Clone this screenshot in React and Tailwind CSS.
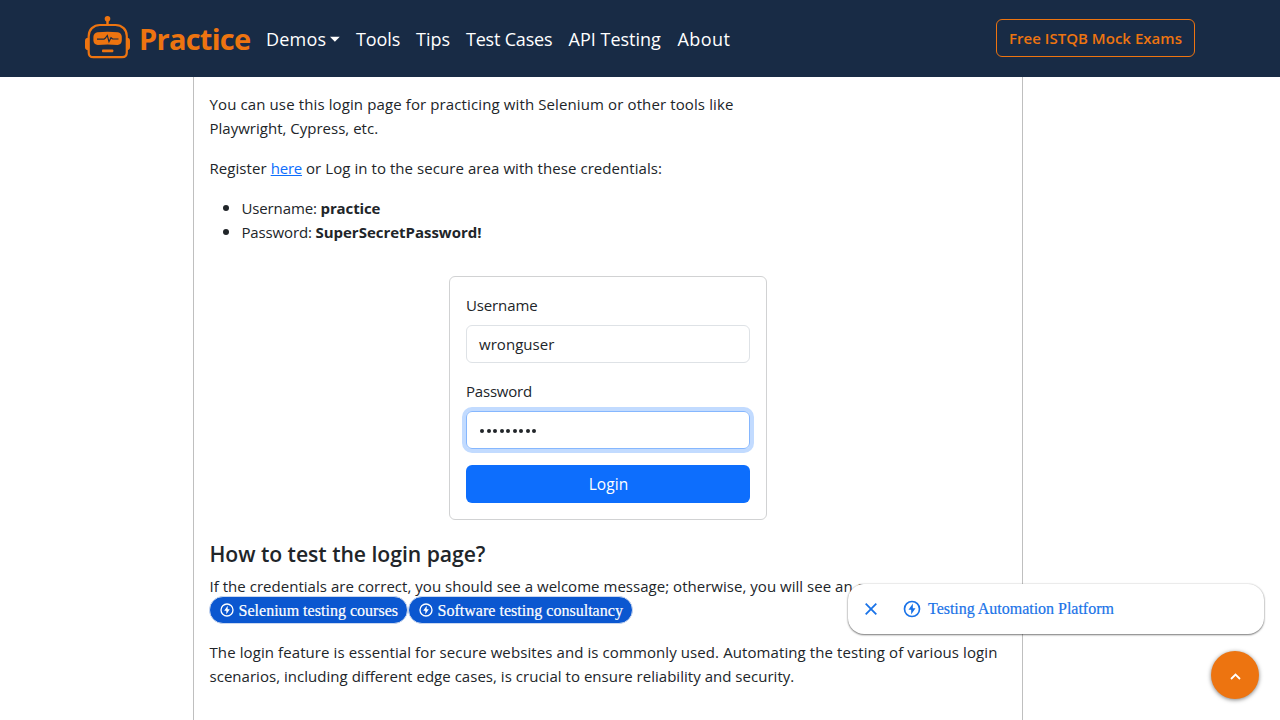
import React from "react";

function RobotLogo() {
  return (
    <svg className="h-[45px] w-[45px] shrink-0" viewBox="0 0 45 45" fill="none">
      <circle cx="22.5" cy="3.7" r="2.8" fill="#ed7410" />
      <path d="M22.5 4v7" stroke="#ed7410" strokeWidth="2.4" />
      <path
        d="M15 10h15.500c6.500 0 11.300 4.600 11.300 11v16.500q0 4.700-4.700 4.700H8.400q-4.700 0-4.700-4.700V21c0-6.400 4.800-11 11.300-11Z"
        stroke="#ed7410"
        strokeWidth="2.200"
      />
      <path d="M3.500 22.800v12.400H3c-1.700 0-3-1.200-3-2.900v-6.600c0-1.700 1.300-2.900 3-2.900zM42 22.800v12.400h.2c1.600 0 2.800-1.200 2.800-2.900v-6.600c0-1.700-1.200-2.900-2.800-2.900z" fill="#ed7410" />
      <path
        d="M12.500 17.200q10.200-1 20.400 0c2.300.4 3.900 2.200 3.900 4.500v3.800c0 2.600-1.900 4.300-4.200 4.500q-9.900-1.200-19.800 0c-2.400-.2-4.400-1.900-4.400-4.500v-3.800c0-2.300 1.800-4.100 4.100-4.500Z"
        fill="#ed7410"
      />
      <path d="M12 24.200h7l1.400-1.200 1.900-2.500 1.700 6.200 2-4 1.600 1.300H33.500" stroke="#182b45" strokeWidth="1.200" />
      <rect x="17" y="34.500" width="11.300" height="2.700" rx=".8" fill="#ed7410" />
    </svg>
  );
}

function BoltIcon({ className }) {
  return (
    <svg className={className} viewBox="0 0 24 24" fill="none">
      <circle cx="12" cy="12" r="9" stroke="currentColor" strokeWidth="2" />
      <path d="M13 5.500 7.800 13H11v5.500L16.200 11H13z" fill="currentColor" />
    </svg>
  );
}

export default function App() {
  return (
    <div className="relative flex h-[720px] flex-col overflow-hidden bg-white font-['Open_Sans','Noto_Sans',sans-serif] text-[15px] leading-6 text-[#212529]">
      <header className="flex h-[77px] shrink-0 items-center bg-[#182b45] pr-[85px] pl-[85px]">
        <div className="flex items-center pb-[3px]">
          <RobotLogo />
          <span className="ml-[9px] w-[127px] pt-[3px] text-[29px] leading-9 font-bold tracking-[-0.74px] text-[#ed7410]">Practice</span>
        </div>
        <nav className="flex flex-1 items-center gap-4 text-[18px] whitespace-nowrap text-white">
          <span className="flex w-[74px] items-center tracking-[0.2px]">
            Demos
            <svg className="ml-[4px] h-[6px] w-[11px]" viewBox="0 0 11 6">
              <path d="M0 .5h11L5.500 6z" fill="currentColor" />
            </svg>
          </span>
          <span className="w-[44px] tracking-[-0.1px]">Tools</span>
          <span className="w-[34px]">Tips</span>
          <span className="w-[86.5px] tracking-[-0.2px]">Test Cases</span>
          <span className="w-[93px] tracking-[0.01px]">API Testing</span>
          <span className="tracking-[0.46px]">About</span>
        </nav>
        <button className="mb-[2px] h-[38px] w-[199px] rounded-md border border-[#ed7410] font-semibold tracking-[0.03px] whitespace-nowrap text-[#ed7410]">
          Free ISTQB Mock Exams
        </button>
      </header>

      <main className="ml-[193px] w-[830px] flex-1 border-x border-[#bfbfbf] px-[15.500px] pt-[15px] whitespace-nowrap">
        <p className="tracking-[0.117px]">
          You can use this login page for practicing with Selenium or other tools like
          <br />
          <span className="tracking-[0.01px]">Playwright, Cypress, etc.</span>
        </p>
        <p className="mt-4 tracking-[0.065px]">
          Register <a className="tracking-[-0.2px] text-[#0d6efd] underline">here</a> or Log in to the secure area with these credentials:
        </p>
        <ul className="mt-4 list-disc pl-8 marker:text-[17px]">
          <li className="tracking-[-0.13px]">Username: <b className="tracking-[-0.12px]">practice</b></li>
          <li className="tracking-[-0.15px]">Password: <b className="tracking-[-0.02px]">SuperSecretPassword!</b></li>
        </ul>

        <form className="mx-auto mt-8 h-[244px] w-[318px] rounded-md border border-[#d1d2d3] p-4">
          <label className="block tracking-[-0.13px]">Username</label>
          <div className="mt-2 h-[38px] rounded-md border border-[#dee2e6] px-3 py-[6px] tracking-[0.05px]">wronguser</div>
          <label className="mt-4 block tracking-[-0.2px]">Password</label>
          <div className="mt-2 flex h-[38px] items-center gap-[2.500px] rounded-md border border-[#86b7fe] px-[13px] pt-[2px] shadow-[0_0_0_4px_#c2dbff]">
            {Array.from({ length: 9 }, (_, i) => (
              <span key={i} className="size-1 rounded-full bg-[#212529]" />
            ))}
          </div>
          <button type="button" className="mt-4 h-[38px] w-full rounded-md bg-[#0d6efd] pl-px text-[15.500px] tracking-[0.1px] text-white">Login</button>
        </form>

        <h2 className="mt-[19px] text-[21.200px] leading-[29px] font-semibold tracking-[-0.05px]">How to test the login page?</h2>
        <p className="mt-[6px] tracking-[0.03px]">If the credentials are correct, you should see a welcome message; otherwise, you will see an error message.</p>
        <div className="-mt-[2px] -ml-[0.5px] flex font-['Liberation_Serif',serif] text-[16px] leading-[26px] text-white [-webkit-text-stroke:0.2px_white]">
          <span className="flex h-[28px] w-[199px] items-center rounded-full border border-[#c9d7ef] bg-[#0b57d0] pl-[9px] tracking-[0.02px]">
            <BoltIcon className="mr-[3.500px] size-4 shrink-0" />
            <span className="pt-[2px]">Selenium testing courses</span>
          </span>
          <span className="flex h-[28px] w-[225px] items-center rounded-full border border-[#c9d7ef] bg-[#0b57d0] pl-[9px] tracking-[0.02px]">
            <BoltIcon className="mr-[3.500px] size-4 shrink-0" />
            <span className="pt-[2px]">Software testing consultancy</span>
          </span>
        </div>
        <p className="mt-4 tracking-[0.093px]">
          The login feature is essential for secure websites and is commonly used. Automating the testing of various login
          <br />
          <span className="tracking-[0.03px]">scenarios, including different edge cases, is crucial to ensure reliability and security.</span>
        </p>
      </main>

      <aside className="absolute top-[584px] left-[848px] flex h-[50px] w-[416px] items-center rounded-2xl bg-white font-['Liberation_Serif',serif] text-[16px] text-[#1a73e8] shadow-[0_1px_2px_rgba(0,0,0,0.5),0_0_2px_rgba(0,0,0,0.2)] [-webkit-text-stroke:0.2px_#1a73e8]">
        <svg className="ml-[17px] size-3" viewBox="0 0 12 12">
          <path d="m.7.7 10.600 10.600M11.300.7.7 11.300" stroke="currentColor" strokeWidth="1.800" />
        </svg>
        <BoltIcon className="ml-[25px] size-5" />
        <span className="ml-[6px] tracking-[-0.02px]">Testing Automation Platform</span>
      </aside>

      <button className="absolute top-[651px] left-[1211px] flex size-12 items-center justify-center rounded-full bg-[#ed7410] text-white shadow-[0_1px_4px_rgba(0,0,0,0.5)]">
        <svg className="mt-[2px] h-[7px] w-[11px]" viewBox="0 0 11 7" fill="none">
          <path d="m1 6 4.500-4.500L10 6" stroke="currentColor" strokeWidth="1.800" />
        </svg>
      </button>
    </div>
  );
}
